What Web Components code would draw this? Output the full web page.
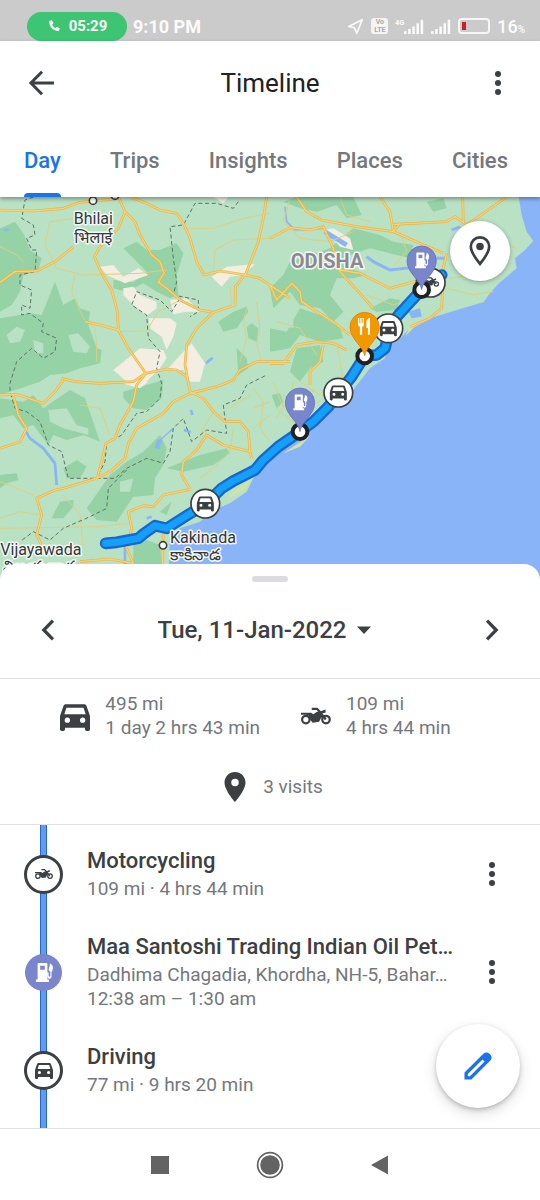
<!DOCTYPE html>
<html lang="en">
<head>
<meta charset="utf-8">
<meta name="viewport" content="width=device-width, initial-scale=1">
<title>Timeline</title>
<style>
  :root {
    --ink: #3c4043;
    --muted: #74787d;
    --blue: #1a73e8;
    --line: #e0e1e3;
    --violet: #7986cb;
    --font: Roboto, "Noto Sans", sans-serif;
  }

  body {
    margin: 0;
    min-height: 100vh;
    display: flex;
    flex-direction: column;
    background: #fff;
    color: var(--ink);
    font-family: var(--font);
  }

  timeline-list {
    flex: 1;
  }
</style>
</head>
<body>
  <status-bar></status-bar>
  <app-header heading="Timeline">
    <tab-item selected>Day</tab-item>
    <tab-item>Trips</tab-item>
    <tab-item>Insights</tab-item>
    <tab-item>Places</tab-item>
    <tab-item>Cities</tab-item>
  </app-header>
  <timeline-map></timeline-map>
  <day-summary date="Tue, 11-Jan-2022">
    <stat-item icon="car" size="40">495 mi<br>1 day 2 hrs 43 min</stat-item>
    <stat-item icon="moto" size="40">109 mi<br>4 hrs 44 min</stat-item>
    <stat-item icon="place" size="36" slot="visits">3 visits</stat-item>
  </day-summary>
  <timeline-list>
    <timeline-entry icon="moto" menu>
      <span slot="title">Motorcycling</span>
      109 mi · 4 hrs 44 min
    </timeline-entry>
    <timeline-entry icon="gas" visit menu>
      <span slot="title">Maa Santoshi Trading Indian Oil Pet…</span>
      Dadhima Chagadia, Khordha, NH-5, Bahar…<br>12:38 am – 1:30 am
    </timeline-entry>
    <timeline-entry icon="car">
      <span slot="title">Driving</span>
      77 mi · 9 hrs 20 min
    </timeline-entry>
  </timeline-list>
  <system-nav></system-nav>

<script>
const ICONS = {
  car: ['0 0 24 24', '<path d="M18.92 6.01C18.72 5.42 18.16 5 17.5 5h-11c-.66 0-1.21.42-1.42 1.01L3 12v8c0 .55.45 1 1 1h1c.55 0 1-.45 1-1v-1h12v1c0 .55.45 1 1 1h1c.55 0 1-.45 1-1v-8l-2.08-5.99zM7.4 16.1a1.6 1.6 0 1 1 0-3.2 1.6 1.6 0 0 1 0 3.2zm9.2 0a1.6 1.6 0 1 1 0-3.2 1.6 1.6 0 0 1 0 3.2zM5.6 11l1.250-4h10.300l1.250 4H5.600z"/>'],
  moto: ['-4 -4 32 32', `
    <g fill="none" stroke="currentColor" stroke-width="1.8">
      <circle cx="3.9" cy="14.8" r="3"/><circle cx="20" cy="14.8" r="3"/>
      <path d="M8.6 6.2h4.2l2.4 2.6 4.6 6"/>
    </g>
    <path d="M0 9.4h8.2l1.6 1.2 3-2 2.4-.2 4.3-1.7.3 2.4-3.2.8 1.2 2.4-1.7 1-1.6 3.3-5.2.7-2.2-2.7-1-3L4 10.9H0z"/>`],
  gas: ['0 0 24 24', '<path fill-rule="evenodd" d="M4 19.500h1.600V4.200c0-.7.5-1.200 1.200-1.200h7.400c.7 0 1.200.5 1.200 1.200v8.300h1.200v3.600c0 1 1.800 1 1.800 0v-4.400c-1.400-.5-2-1.600-1.600-3l1-3.200V3.300l2.200 1.600c.6.6.9 1.500.9 3l-.4 2.400c-.1.8-.5 1.300-1 1.400v4.800c0 3-4 3-4 0v-2.300h-.1v5.300h1.600V22H4zM8.200 5.800v4h4.600v-4z"/>'],
  food: ['0 0 24 24', '<path d="M4 2h1.600v6h1.200V2h1.600v6h1.200V2h1.600v7.400c0 1.600-.9 2.600-2.200 3V22H6.300v-9.600C4.900 12 4 11 4 9.400zM14 7c0-2.800 2-5 4.400-5v20h-2.500v-8H14z"/>'],
  place: ['0 0 24 24', '<path d="M12 2C8.130 2 5 5.130 5 9c0 5.250 7 13 7 13s7-7.750 7-13c0-3.870-3.130-7-7-7zm0 9.500a2.500 2.500 0 1 1 0-5 2.500 2.500 0 0 1 0 5z"/>'],
  placeOutline: ['0 0 24 24', '<path fill="none" stroke="currentColor" stroke-width="1.8" d="M12 20.600c-2.600-3.200-6.100-7.800-6.100-11.600a6.100 6.100 0 0 1 12.200 0c0 3.800-3.500 8.400-6.100 11.600z"/><circle cx="12" cy="9" r="2.500"/>'],
  back: ['0 0 24 24', '<path fill="none" stroke="currentColor" stroke-width="2" d="M20 12H5M12 4.500 4.600 12l7.400 7.500"/>'],
  more: ['0 0 24 24', '<circle cx="12" cy="6" r="2"/><circle cx="12" cy="12" r="2"/><circle cx="12" cy="18" r="2"/>'],
  prev: ['0 0 24 24', '<path fill="none" stroke="currentColor" stroke-width="2.200" d="M15.300 5.800 9.200 12l6.100 6.200"/>'],
  next: ['0 0 24 24', '<path fill="none" stroke="currentColor" stroke-width="2.200" d="M8.700 5.800l6.100 6.200-6.100 6.200"/>'],
  caret: ['0 0 24 24', '<path d="M5 8.500h14l-7 7.500z"/>'],
  pencil: ['0 0 24 24', '<path fill-rule="evenodd" d="M3 16.400 15.600 3.800a2.900 2.900 0 0 1 4.100 0l.5.5a2.900 2.900 0 0 1 0 4.100L7.600 21H3zM5.200 17.400v1.400h1.400L16.400 9 15 7.600z"/>'],
  phone: ['0 0 24 24', '<path d="M7.200 2.200 3.800 4C3 12.600 11.400 21.400 20 20.600l1.900-3.600c.2-.5 0-1-.5-1.300l-3.700-2c-.5-.3-1-.2-1.400.2l-1.600 1.800c-2.700-1.300-4.700-3.700-5.600-6.400l1.500-1.600c.4-.4.4-.9.2-1.400L8.600 2.700c-.2-.6-.8-.8-1.400-.5z"/>'],
  location: ['0 0 24 24', '<path fill="none" stroke="currentColor" stroke-width="2.400" stroke-linejoin="round" d="M21.500 2.500 2.500 12l8 1.800 3.300 7.700z"/>'],
  signal: ['0 0 24 18', '<path d="M0 18v-3l3-1v4zM5 18v-6h3v6zM10 18V9h3v9zM15 18V5h3v13zM20 18V1h3v17z"/>'],
  square: ['0 0 24 24', '<rect x="3" y="3" width="18" height="18"/>'],
  home: ['0 0 24 24', '<circle cx="12" cy="12" r="8.400"/><circle cx="12" cy="12" r="10.600" fill="none" stroke="currentColor" stroke-width="1.500"/>'],
  triangle: ['0 0 24 24', '<path d="M3 12 20 2.500v19z"/>']
};

// svg markup for an icon, also used for the badges inside the map
function iconSvg(name, attrs = '') {
  const [box, body] = ICONS[name];
  return `<svg viewBox="${box}" fill="currentColor" aria-hidden="true" ${attrs}>${body}</svg>`;
}

function attach(el, html) {
  const template = document.createElement('template');
  template.innerHTML = html;
  el.attachShadow({mode: 'open'}).appendChild(template.content.cloneNode(true));
}

const BUTTON_RESET = `
  button {
    display: flex;
    align-items: center;
    justify-content: center;
    padding: 0;
    border: 0;
    background: none;
    color: inherit;
    font: inherit;
    cursor: pointer;
  }
`;

class UiIcon extends HTMLElement {
  constructor() {
    super();
    const size = this.getAttribute('size') || 24;
    attach(this, `
      <style>
        :host { display: block; flex: none; width: ${size}px; }
        svg { display: block; width: 100%; }
      </style>
      ${iconSvg(this.getAttribute('name'))}
    `);
  }
}
customElements.define('ui-icon', UiIcon);

class StatusBar extends HTMLElement {
  constructor() {
    super();
    attach(this, `
      <style>
        :host {
          display: flex;
          align-items: center;
          justify-content: space-between;
          height: 30px;
          padding: 11px 15px 0 27px;
          background: #cbcbcb;
          color: #fbfbfb;
          font-size: 18px;
        }
        .side { display: flex; align-items: center; gap: 6px; }
        .call {
          display: flex;
          align-items: center;
          justify-content: center;
          gap: 8px;
          width: 100px;
          height: 29px;
          border-radius: 15px;
          background: #3dc574;
          font-size: 15px;
          font-weight: 700;
        }
        .time { font-weight: 700; }
        .right { gap: 7px; }
        .lte {
          width: 17px;
          height: 16px;
          border-radius: 3px;
          background: #f4f4f4;
          color: #aaa;
          font: 700 7px/8px var(--font);
          text-align: center;
        }
        .network { display: flex; align-items: flex-end; }
        .network span { align-self: flex-start; font: 700 7px/8px var(--font); }
        .battery {
          width: 28px;
          height: 12px;
          border: 2px solid #f6f6f6;
          border-radius: 4px;
        }
        .battery div { width: 4px; height: 8px; margin: 2px; background: #c8202a; }
        .level { font-weight: 500; }
        small { font-size: 10px; }
      </style>
      <div class="side">
        <div class="call"><ui-icon name="phone" size="14"></ui-icon>05:29</div>
        <div class="time">9:10 PM</div>
      </div>
      <div class="side right">
        <ui-icon name="location" size="17"></ui-icon>
        <div class="lte">Vo<br>LTE</div>
        <div class="network"><span>4G</span><ui-icon name="signal" size="20"></ui-icon></div>
        <ui-icon name="signal" size="20"></ui-icon>
        <div class="battery"><div></div></div>
        <div class="level">16<small>%</small></div>
      </div>
    `);
  }
}
customElements.define('status-bar', StatusBar);

class TabItem extends HTMLElement {
  constructor() {
    super();
    attach(this, `
      <style>
        ${BUTTON_RESET}
        :host { display: flex; color: var(--muted); font-size: 22px; font-weight: 500; }
        :host([selected]) { color: var(--blue); }
        button {
          flex-direction: column;
          justify-content: space-between;
          height: 72px;
          line-height: 26px;
        }
        button::before, button::after {
          content: "";
          width: 100%;
          height: 4px;
          border-radius: 4px 4px 0 0;
        }
        :host([selected]) button::after { background: var(--blue); }
      </style>
      <button type="button"><slot></slot></button>
    `);
  }
}
customElements.define('tab-item', TabItem);

class AppHeader extends HTMLElement {
  constructor() {
    super();
    attach(this, `
      <style>
        ${BUTTON_RESET}
        :host {
          display: block;
          position: relative;
          z-index: 1;
          background: #fff;
          box-shadow: 0 2px 4px rgba(0, 0, 0, .35);
        }
        .bar {
          display: flex;
          align-items: center;
          justify-content: space-between;
          height: 84px;
          padding: 0 24px;
        }
        h1 { margin: 0; color: #202124; font-size: 26px; font-weight: 400; }
        nav { display: flex; justify-content: space-between; padding: 0 32px 0 24px; }
      </style>
      <div class="bar">
        <button type="button" aria-label="Back"><ui-icon name="back" size="36"></ui-icon></button>
        <h1>${this.getAttribute('heading')}</h1>
        <button type="button" aria-label="More options"><ui-icon name="more" size="36"></ui-icon></button>
      </div>
      <nav><slot></slot></nav>
    `);
  }
}
customElements.define('app-header', AppHeader);

// Map geometry, three units to one CSS pixel at the 540px width
const MAIN_ROADS = `
  M0 45 100 48 190 40 240 22 345 12 M0 262 45 230 110 228 165 200 220 155
  M355 6 375 50 355 100 300 155 283 185 305 235 335 285 352 350 355 405 385 460 437 535 410 570 400 620 360 690 345 730 318 745 305 800 290 855
  M375 50 405 80 420 120 455 180 480 200 492 235 475 262 500 280 540 315 600 345 640 352 705 330 706 275 738 235 775 140 790 70 800 6
  M390 6 440 25 480 45 530 55 550 85 570 130 590 200 612 240 660 228 738 240 780 250 810 270 870 310
  M255 380 300 390 355 405 M185 550 225 560 300 565 400 560 437 535 500 522 530 525 560 545
  M640 352 590 400 560 450 555 510 570 590 610 610 640 650 675 680 720 680 745 710 750 770 755 790
  M0 600 50 598 130 625 165 590 190 555
  M40 600 55 660 80 700 60 740 0 760
  M570 595 520 620 490 655 410 700 385 745 375 790 330 830 290 850 190 880 165 885 110 910 125 960 110 1020 130 1060
  M570 595 650 575 700 555 720 525 770 500 870 500
  M570 883 545 840 550 800 590 765 620 720 670 750 750 770
  M570 883 490 900 460 935 430 932 385 950 395 1000 380 1060 400 1105
  M490 990 488 1110 M240 1100 330 1092 400 1105
  M810 130 870 98 930 105 970 95 1000 160 1020 230 1075 290 1120 340 M890 6 920 50 965 75 1070 95 1180 110 1200 85
  M1140 6 1170 50 1180 110 1260 145 1330 175 M1180 88 1340 80 1365 65 1400 90 1520 6 M1388 6 1390 80
  M1260 255 1170 280 1080 235 1020 225 M810 270 830 315 875 265 900 290 905 320 950 350 1000 380 1050 420
  M810 505 850 505 890 450 950 440 1000 445 1040 465 M970 450 960 500 930 530 930 570
  M1330 240 1325 340 1290 370 1230 395 M1340 175 1325 240`;
const MINOR_ROADS = `
  M0 155 50 180 70 200 M225 70 150 80 135 150 170 220 250 240 420 235 500 225 M225 240 215 290 250 370 285 400 290 460 290 500
  M355 410 440 408 475 350 540 315 M810 55 730 70 640 100 550 100 M810 130 700 135 645 165 640 230 M690 275 695 330 M740 340 730 380 740 430 720 500
  M770 320 780 400 770 450 785 500 M240 630 300 640 330 720 M0 860 100 900 M190 900 240 960 250 1060 M0 1000 300 995 390 985
  M125 960 60 950 0 970 M600 760 610 700 640 650 M750 600 690 640 M810 620 760 640 M700 700 690 770 640 820 600 850 M810 660 760 700
  M760 580 790 620 780 700 810 740 M870 10 850 80 900 130 990 140 1060 110 M1020 6 1040 60 1110 80 M1200 110 1220 170 1180 215
  M830 380 900 400 950 480 M1010 440 1030 560 990 640 M900 560 960 600 1000 560 M850 600 900 640 960 620 M830 640 900 700
  M1100 300 1180 330 1260 300 M1350 250 1420 240 1500 235 M1400 100 1450 180 1500 230 M1440 60 1480 130 1550 160 M1340 280 1420 300 1480 290
  M830 670 870 600 880 560 M820 560 850 640 M940 580 920 660`;
const BORDERS = `
  M100 6 75 15 65 70 100 90 105 120 80 130 95 165 110 165 105 230 60 240 60 270 95 285 90 340 65 330 65 360 90 355 130 385 125 410 170 430 165 470 130 490 95 460 50 500 30 565 30 590 45 640 80 650 120 680 145 750 185 770 205 850 290 850 345 850 380 820 440 790 490 805 510 770 520 700 550 670 575 740 620 705 680 715 670 630 720 610 740 570 800 540
  M715 20 700 40 650 25 585 25 550 90 510 95 520 190 530 260 520 300 595 315 595 350 570 365
  M540 310 515 350 480 315 410 290 395 330 440 360 445 430 480 470 470 520 485 565 480 610 440 650 410 655 365 720 320 745 315 800 290 850
  M380 825 325 880 320 940 270 965 190 1000 150 1035 100 1010 60 1040`;
const ROUTE = 'M317 1045 350 1042 415 1030 430 1017 465 992 500 1000 560 962 616 928 665 880 700 858 765 825 790 795 835 755 900 710 940 680 985 635 1015 595 1055 545 1094 483 1130 480 1155 460 1162 430 1165 400 1195 360 1265 284 1310 250 1325 240';

function badge(x, y, icon) {
  return `<circle cx="${x}" cy="${y}" r="43" fill="#fff" stroke="#3c4043" stroke-width="5"/>
    ${iconSvg(icon, `x="${x - 34}" y="${y - 36}" width="68" height="68"`)}`;
}

function stop(x, y, icon, color, edge) {
  return `<circle cx="${x}" cy="${y}" r="22" fill="#fff" stroke="#202124" stroke-width="12"/>
    <path transform="translate(${x} ${y})" d="M0 0C-4-30-44-50-44-87A44 44 0 1 1 44-87C44-50 4-30 0 0Z" fill="${color}" stroke="${edge}" stroke-width="2"/>
    <g color="#fff">${iconSvg(icon, `x="${x - 30}" y="${y - 119}" width="60" height="60"`)}</g>`;
}

class TimelineMap extends HTMLElement {
  constructor() {
    super();
    attach(this, `
      <style>
        ${BUTTON_RESET}
        :host { display: block; position: relative; }
        .map { display: block; width: 100%; background: #b9e1c4; }
        text {
          font: 48px var(--font);
          fill: #34383c;
          stroke: #f3f7f3;
          stroke-width: 9px;
          stroke-linejoin: round;
          paint-order: stroke;
        }
        .state { font-size: 60px; font-weight: 700; fill: #8b898f; }
        button {
          position: absolute;
          top: 24px;
          right: 30px;
          width: 60px;
          height: 60px;
          border-radius: 50%;
          background: #fff;
          box-shadow: 0 1px 4px rgba(0, 0, 0, .3);
        }
      </style>
      <svg class="map" viewBox="0 6 1620 1149" role="img" aria-label="Route along the coast">
        <g fill="#95d2a6">
          <path d="M0 100 45 80 70 115 90 165 125 190 115 225 70 240 60 290 35 330 0 350z"/>
          <path d="M0 370 90 355 125 360 165 260 190 330 225 310 240 340 270 350 265 390 290 460 305 465 300 505 240 520 200 535 150 540 120 560 0 600z"/>
          <path d="M370 160 410 140 440 165 480 165 530 145 550 175 530 240 535 300 510 310 470 290 430 265 380 290 340 280 340 255 400 262 440 230 400 190z"/>
          <path d="M655 380 700 350 740 335 745 350 710 400 670 410z"/>
          <path d="M740 395 755 385 775 400 770 440 745 430z"/>
          <path d="M710 460 740 490 745 520 715 540z"/>
          <path d="M370 590 440 570 490 555 485 610 440 645 400 640 370 610z"/>
          <path d="M0 610 70 620 100 600 130 640 210 585 255 610 300 740 250 720 200 735 160 720 145 750 100 690 70 700 40 660 0 670z"/>
          <path d="M190 820 230 795 260 815 240 850 200 850z"/>
          <path d="M0 840 50 835 55 855 20 865 0 880z"/>
          <path d="M155 970 180 920 220 915 220 935 190 970z"/>
          <path d="M480 720 500 760 490 810 465 850 460 900 400 905 350 980 290 975 260 940 330 840 380 800 430 770z"/>
          <path d="M500 820 600 780 680 760 690 775 640 810 550 830z"/>
          <path d="M400 1020 480 1050 485 1110 400 1110z"/>
          <path d="M480 950 515 920 500 960z"/>
          <path d="M850 20 890 6 1060 6 1085 60 1040 70 1010 30 950 50 900 40z"/>
          <path d="M1280 20 1330 10 1340 40 1300 50z"/>
          <path d="M810 280 850 240 870 200 990 160 1060 100 1140 120 1180 140 1240 150 1230 190 1190 180 1110 160 1050 180 1030 210 1100 240 1060 250 1010 250 990 300 1030 350 1000 380 960 340 900 330 870 290 820 340z"/>
          <path d="M900 340 960 360 1020 400 1030 430 960 440 900 420 870 460 810 470 810 400 860 410z"/>
          <path d="M1110 340 1170 310 1200 315 1190 345 1130 350z"/>
          <path d="M890 460 960 450 970 500 930 520 900 560 870 530z"/>
          <path d="M815 600 840 595 850 620 830 640z"/>
        </g>
        <g fill="#b9e1c4">
          <path d="M50 395 75 405 60 440 30 445 20 420z"/>
          <path d="M100 435 130 445 130 475 105 475z"/>
          <path d="M205 420 235 415 270 455 260 475 220 470z"/>
          <path d="M145 645 200 640 230 690 265 700 265 720 190 700 150 680z"/>
          <path d="M830 370 880 375 880 400 840 390z"/>
          <path d="M360 860 400 850 390 890 360 890z"/>
        </g>
        <g fill="#f4ede2">
          <path d="M300 215 340 210 370 245 415 220 445 240 375 265 320 240z"/>
          <path d="M370 280 400 275 420 300 470 320 470 340 440 362 400 330 370 300z"/>
          <path d="M510 315 560 310 600 350 560 350 520 358z"/>
          <path d="M635 245 680 215 765 207 730 240 690 245 665 275z"/>
          <path d="M445 370 510 370 530 385 520 425 500 465 485 425 450 400z"/>
          <path d="M340 525 420 460 490 465 500 490 480 520 430 570 380 560z"/>
          <path d="M500 525 550 470 575 445 615 505 600 560 570 560 550 525z"/>
          <path d="M365 565 445 560 420 580z"/>
          <path d="M975 105 1000 100 1050 130 1060 165 1020 155z"/>
          <path d="M640 6 685 6 670 25z"/>
        </g>
        <path fill="#8ab4f8" d="M1555 0 1565 60 1580 110 1600 138 1575 165 1545 190 1550 220 1500 262 1470 295 1450 322 1370 345 1290 370 1240 390 1205 425 1165 448 1155 490 1110 520 1055 590 990 650 930 708 870 750 810 785 760 850 740 890 690 925 640 945 600 980 540 1000 510 1025 505 1160 1620 1160 1620 0z"/>
        <path fill="#d3e3a5" d="M1230 395 1290 372 1240 398 1215 425zM850 775 930 722 960 690 900 755zM700 890 755 850 735 885 680 910z"/>
        <g fill="none" stroke="#8ab4f8" stroke-width="8">
          <path d="M75 705 90 730 130 760 165 805 170 870"/>
          <path d="M470 760 480 735" stroke-width="14"/>
          <path d="M475 740 520 700" stroke-width="4"/>
          <path d="M573 645 577 660M552 705 572 712M440 970 455 965"/>
          <path d="M1100 185 1120 200 1170 225 1260 215 1290 190 1340 190" stroke-width="9"/>
          <path d="M855 35 860 80 885 105 970 100" stroke-width="5"/>
          <path d="M975 110 1040 150" stroke-width="14"/>
          <path d="M618 505 638 488M12 105H26M375 1020V1110M1355 105 1380 95"/>
        </g>
        <path fill="#8ab4f8" d="M1225 350 1260 340 1265 365 1235 370z"/>
        <g fill="none" stroke-linejoin="round">
          <path d="${MINOR_ROADS}" stroke="#dfcf80" stroke-width="3"/>
          <path d="${BORDERS}" stroke="#5f7268" stroke-width="3" stroke-dasharray="12 8"/>
          <path d="${MAIN_ROADS}" stroke="#e6b44f" stroke-width="8"/>
          <path d="${MAIN_ROADS}" stroke="#fbd26d" stroke-width="4"/>
          <g stroke-linecap="round">
            <path d="${ROUTE}" stroke="#1a67cc" stroke-width="35"/>
            <path d="${ROUTE}" stroke="#12a0fb" stroke-width="21"/>
          </g>
        </g>
        <g fill="#fff" stroke="#3c4043" stroke-width="5">
          <circle cx="279" cy="17" r="11"/><circle cx="345" cy="2" r="11"/><circle cx="489" cy="1051" r="11"/>
        </g>
        <text x="280" y="88" text-anchor="middle">Bhilai</text>
        <text x="280" y="145" text-anchor="middle">भिलाई</text>
        <text class="state" x="872" y="220">ODISHA</text>
        <text x="510" y="1043">Kakinada</text>
        <text x="510" y="1094">కాకినాడ</text>
        <text x="1" y="1081">Vijayawada</text>
        <text x="10" y="1132">విజయవాడ</text>
        <g color="#3c4043">
          ${badge(616, 926, 'car')}
          ${badge(1015, 593, 'car')}
          ${badge(1165, 400, 'car')}
          ${badge(1292, 263, 'moto')}
        </g>
        ${stop(900, 710, 'gas', '#7986cb', '#5c6bc0')}
        ${stop(1094, 483, 'food', '#f29900', '#e37400')}
        ${stop(1265, 284, 'gas', '#7986cb', '#5c6bc0')}
      </svg>
      <button type="button" aria-label="Show places"><ui-icon name="placeOutline" size="36"></ui-icon></button>
    `);
  }
}
customElements.define('timeline-map', TimelineMap);

class StatItem extends HTMLElement {
  constructor() {
    super();
    attach(this, `
      <style>
        :host {
          display: flex;
          align-items: center;
          gap: 10px;
          color: var(--muted);
          font-size: 19px;
          line-height: 24px;
        }
        ui-icon { color: var(--ink); }
      </style>
      <ui-icon name="${this.getAttribute('icon')}" size="${this.getAttribute('size')}"></ui-icon>
      <div><slot></slot></div>
    `);
  }
}
customElements.define('stat-item', StatItem);

class DaySummary extends HTMLElement {
  constructor() {
    super();
    attach(this, `
      <style>
        ${BUTTON_RESET}
        :host {
          display: block;
          position: relative;
          margin-top: -16px;
          padding-top: 12px;
          border-radius: 16px 16px 0 0;
          background: #fff;
        }
        .handle {
          width: 36px;
          height: 6px;
          margin: 0 auto;
          border-radius: 3px;
          background: #dadce0;
        }
        .date {
          display: flex;
          align-items: center;
          justify-content: space-between;
          height: 96px;
          padding: 0 30px;
          border-bottom: 1px solid var(--line);
        }
        .day { gap: 6px; padding-right: 6px; font-size: 24px; font-weight: 500; }
        .stats {
          display: flex;
          flex-direction: column;
          align-items: center;
          gap: 29px;
          padding: 13px 0 19px;
          border-bottom: 1px solid var(--line);
        }
        .modes { display: flex; gap: 36px; padding-right: 34px; }
      </style>
      <div class="handle"></div>
      <div class="date">
        <button type="button" aria-label="Previous day"><ui-icon name="prev" size="36"></ui-icon></button>
        <button type="button" class="day">${this.getAttribute('date')}<ui-icon name="caret" size="24"></ui-icon></button>
        <button type="button" aria-label="Next day"><ui-icon name="next" size="36"></ui-icon></button>
      </div>
      <div class="stats">
        <div class="modes"><slot></slot></div>
        <slot name="visits"></slot>
      </div>
    `);
  }
}
customElements.define('day-summary', DaySummary);

class TimelineEntry extends HTMLElement {
  constructor() {
    super();
    const menu = this.hasAttribute('menu')
      ? '<button type="button" aria-label="More options"><ui-icon name="more" size="36"></ui-icon></button>'
      : '';
    attach(this, `
      <style>
        ${BUTTON_RESET}
        :host { display: flex; align-items: center; padding: 16px 30px 16px 24px; }
        .dot {
          display: flex;
          align-items: center;
          justify-content: center;
          flex: none;
          box-sizing: border-box;
          width: 39px;
          height: 39px;
          border: 3px solid var(--ink);
          border-radius: 50%;
          background: #fff;
        }
        :host([visit]) .dot {
          width: 37px;
          height: 37px;
          margin: 1px;
          border: 0;
          background: var(--violet);
          color: #fff;
        }
        .text {
          flex: 1;
          min-width: 0;
          margin-left: 24px;
          color: var(--muted);
          font-size: 19px;
          line-height: 24px;
          white-space: nowrap;
        }
        h2 { margin: 0 0 2px; color: var(--ink); font-size: 22px; line-height: 28px; font-weight: 500; }
      </style>
      <div class="dot"><ui-icon name="${this.getAttribute('icon')}" size="24"></ui-icon></div>
      <div class="text"><h2><slot name="title"></slot></h2><slot></slot></div>
      ${menu}
    `);
  }
}
customElements.define('timeline-entry', TimelineEntry);

class TimelineList extends HTMLElement {
  constructor() {
    super();
    attach(this, `
      <style>
        ${BUTTON_RESET}
        /* the rail runs behind the entries for the whole height */
        :host {
          display: block;
          position: relative;
          padding: 6px 0 14px;
          background: linear-gradient(90deg, #2a66c8 1px, #5e9bf5 1px 6px, #2a66c8 6px) 40px 0 / 7px 100% no-repeat;
        }
        .edit {
          position: absolute;
          right: 20px;
          bottom: 20px;
          width: 84px;
          height: 84px;
          border-radius: 50%;
          background: #fff;
          color: var(--blue);
          box-shadow: 0 2px 4px rgba(0, 0, 0, .2), 0 5px 14px rgba(0, 0, 0, .14);
        }
      </style>
      <slot></slot>
      <button type="button" class="edit" aria-label="Edit day"><ui-icon name="pencil" size="36"></ui-icon></button>
    `);
  }
}
customElements.define('timeline-list', TimelineList);

class SystemNav extends HTMLElement {
  constructor() {
    super();
    attach(this, `
      <style>
        ${BUTTON_RESET}
        :host {
          display: flex;
          justify-content: center;
          gap: 84px;
          height: 71px;
          border-top: 1px solid var(--line);
          color: #636363;
        }
      </style>
      <button type="button" aria-label="Recent apps"><ui-icon name="square" size="24"></ui-icon></button>
      <button type="button" aria-label="Home"><ui-icon name="home" size="28"></ui-icon></button>
      <button type="button" aria-label="Back"><ui-icon name="triangle" size="24"></ui-icon></button>
    `);
  }
}
customElements.define('system-nav', SystemNav);
</script>
</body>
</html>
